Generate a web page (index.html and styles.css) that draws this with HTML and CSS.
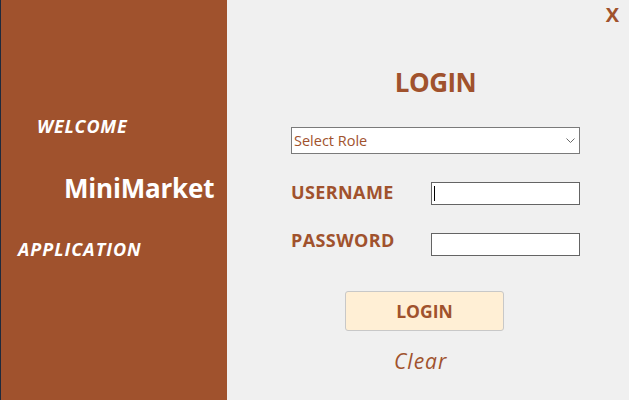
FILE: index.html
```html
<!DOCTYPE html>
<html>
<head>
<meta charset="utf-8">
<link rel="stylesheet" href="styles.css">
</head>
<body>
<div class="window">
  <aside class="side">
    <div class="welcome">WELCOME</div>
    <div class="brand">MiniMarket</div>
    <div class="app">APPLICATION</div>
  </aside>
  <main class="main">
    <div class="close">X</div>
    <div class="form">
      <h1 class="title">LOGIN</h1>
      <div class="select-wrap">
        <div class="select">Select Role</div>
        <svg class="chev" width="9" height="6" viewBox="0 0 9 6"><polyline points="0.5,0.5 4.5,4.5 8.5,0.5" fill="none" stroke="#6a6a6a" stroke-width="1"/></svg>
      </div>
      <div class="row">
        <label class="label label-user">USERNAME</label>
        <div class="input focused"><span class="caret"></span></div>
      </div>
      <div class="row">
        <label class="label label-pass">PASSWORD</label>
        <div class="input"></div>
      </div>
      <button class="btn">LOGIN</button>
      <div class="clear">Clear</div>
    </div>
  </main>
</div>
</body>
</html>
```
FILE: styles.css
```css
* { box-sizing: border-box; }
html, body { margin: 0; padding: 0; }
body {
  width: 629px;
  height: 400px;
  overflow: hidden;
  background: #f0f0f0;
  font-family: "Open Sans", "Noto Sans", sans-serif;
}
.window {
  display: flex;
  width: 629px;
  height: 400px;
}
.side {
  width: 227px;
  flex: none;
  background: #a0522d;
  border-left: 1px solid #1f2a3c;
  color: #fff;
  display: flex;
  flex-direction: column;
  align-items: flex-start;
  padding-top: 117px;
}
.welcome, .app {
  font-size: 18px;
  line-height: 18px;
  font-weight: 700;
  font-style: italic;
}
.welcome { margin-left: 36px; letter-spacing: 0.8px; }
.brand {
  margin-top: 40px;
  margin-left: 63px;
  font-size: 26px;
  line-height: 26px;
  font-weight: 700;
  letter-spacing: -0.2px;
}
.app { margin-top: 39px; margin-left: 17px; letter-spacing: 1px; }

.main {
  flex: 1;
  position: relative;
  padding-left: 64px;
  padding-top: 69px;
}
.close {
  position: absolute;
  top: 5px;
  right: 10px;
  color: #a0522d;
  font-size: 20px;
  line-height: 20px;
  font-weight: 700;
}
.form { width: 289px; display: flex; flex-direction: column; align-items: flex-start; }
.title {
  margin: 0;
  align-self: stretch;
  text-align: center;
  color: #a0522d;
  font-size: 26px;
  line-height: 27px;
  font-weight: 700;
  letter-spacing: -0.5px;
}
.select-wrap {
  position: relative;
  margin-top: 31px;
  width: 289px;
}
.select {
  height: 27px;
  background: #fff;
  border: 1px solid #7a7a7a;
  color: #a0522d;
  font-size: 14.5px;
  line-height: 25px;
  padding-left: 2px;
}
.chev { position: absolute; right: 5px; top: 11px; }
.row {
  margin-top: 28px;
  display: flex;
  align-items: flex-start;
  width: 289px;
}
.label {
  width: 140px;
  color: #a0522d;
  font-size: 18px;
  line-height: 18px;
  font-weight: 700;
  letter-spacing: 0.4px;
}
.label-user { margin-top: 1px; }
.label-pass { margin-top: -2px; }
.input {
  width: 149px;
  height: 23px;
  background: #fff;
  border: 1px solid #646464;
  position: relative;
}
.caret {
  position: absolute;
  left: 2px;
  top: 3px;
  width: 1px;
  height: 15px;
  background: #000;
}
.btn {
  margin-top: 35px;
  margin-left: 54px;
  width: 159px;
  height: 40px;
  background: #ffefd5;
  border: 1px solid #c8c8c8;
  border-radius: 3px;
  color: #a0522d;
  font-family: "Open Sans", "Noto Sans", sans-serif;
  font-size: 17.5px;
  font-weight: 700;
  padding: 0;
}
.clear {
  margin-top: 20px;
  margin-left: 103px;
  color: #a0522d;
  font-style: italic;
  font-size: 21px;
  line-height: 21px;
  letter-spacing: 1px;
}
```
